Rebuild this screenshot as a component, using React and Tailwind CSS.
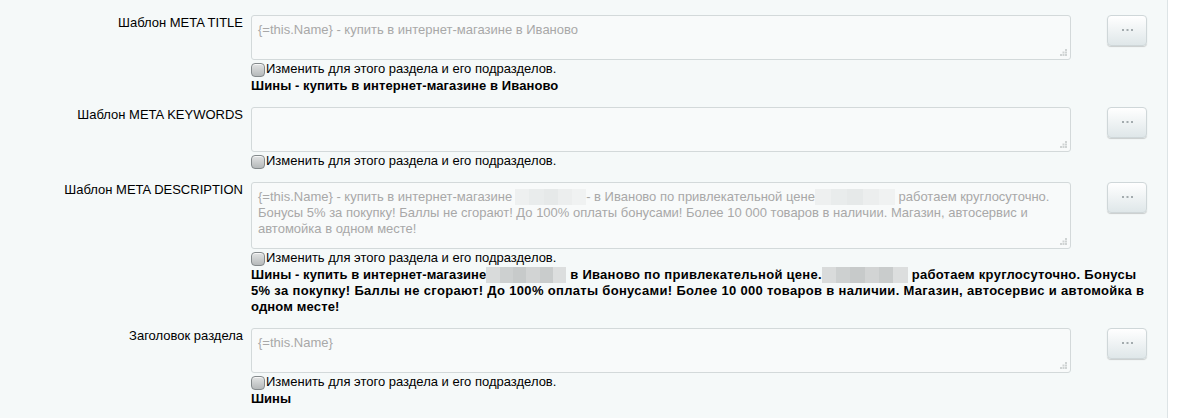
import React from "react";

const font = { fontFamily: '"Liberation Sans", Arial, sans-serif' };

function Grip() {
  return (
    <svg className="absolute right-[3px] bottom-[3px]" width="7" height="7" viewBox="0 0 7 7">
      <rect x="5" y="0" width="2" height="2" fill="#cfd3d3" />
      <rect x="2.5" y="2.5" width="2" height="2" fill="#cfd3d3" />
      <rect x="5" y="2.5" width="2" height="2" fill="#cfd3d3" />
      <rect x="0" y="5" width="2" height="2" fill="#cfd3d3" />
      <rect x="2.5" y="5" width="2" height="2" fill="#cfd3d3" />
      <rect x="5" y="5" width="2" height="2" fill="#cfd3d3" />
    </svg>
  );
}

function Area({ children, tall }) {
  return (
    <div
      className={`relative w-[820px] ${tall ? "h-[67px]" : "h-[45px]"} rounded-[3px] border border-[#d3d9da] bg-[#f8fafa] px-[6px] pt-[6px] text-[13px] leading-[16px] text-[#a8a8a8]`}
    >
      {children}
      <Grip />
    </div>
  );
}

function DotsButton() {
  return (
    <div className="ml-[36px] flex h-[31px] w-[40px] items-center justify-center rounded-[4px] border border-[#cfd7d9] bg-gradient-to-b from-[#ffffff] to-[#dfe7e9] shadow-[0_1px_1px_rgba(0,0,0,0.18)]">
      <svg width="11" height="3" viewBox="0 0 11 3">
        <rect x="0" y="0" width="2" height="2" fill="#a3abae" />
        <rect x="4.5" y="0" width="2" height="2" fill="#a3abae" />
        <rect x="9" y="0" width="2" height="2" fill="#a3abae" />
      </svg>
    </div>
  );
}

function Check() {
  return (
    <div className="flex h-[17px] items-start text-[13px] leading-[17px] text-black">
      <span className="mt-[3px] inline-block h-[14px] w-[14px] rounded-[4px] border border-[#83898b] bg-gradient-to-b from-[#e2e4e4] to-[#b5b9ba] shadow-[inset_0_1px_0_rgba(255,255,255,0.7)]" />
      <span className="ml-[1px]">Изменить для этого раздела и его подразделов.</span>
    </div>
  );
}

function BlurLight({ w }) {
  return (
    <span className="inline-flex h-[16px] align-top" style={{ width: w }}>
      <span className="h-full flex-1 bg-[#eef0f0]" />
      <span className="h-full flex-1 bg-[#e9ecec]" />
      <span className="h-full flex-1 bg-[#e6e9e9]" />
      <span className="h-full flex-1 bg-[#eceeee]" />
      <span className="h-full flex-1 bg-[#f0f2f2]" />
    </span>
  );
}

function BlurDark({ w }) {
  return (
    <span className="inline-flex h-[16px] align-top" style={{ width: w }}>
      <span className="h-full flex-1 bg-[#d9dbdb]" />
      <span className="h-full flex-1 bg-[#cdd0d0]" />
      <span className="h-full flex-1 bg-[#c7caca]" />
      <span className="h-full flex-1 bg-[#d2d4d4]" />
      <span className="h-full flex-1 bg-[#c9cccc]" />
      <span className="h-full flex-1 bg-[#dcdede]" />
    </span>
  );
}

function Row({ label, area, tall, bold }) {
  return (
    <div className="mb-[13px] flex items-start">
      <div className="w-[243px] shrink-0 text-right text-[13px] leading-[16px] text-black">{label}</div>
      <div className="ml-[8px] flex flex-col">
        <div className="flex items-start">
          <Area tall={tall}>{area}</Area>
          <DotsButton />
        </div>
        <Check />
        {bold && <div className="mt-[1px] text-[13px] font-bold leading-[16px] text-black">{bold}</div>}
      </div>
    </div>
  );
}

export default function App() {
  return (
    <div className="flex min-h-[418px] w-[1183px] bg-white" style={font}>
      <div className="w-[1168px] border-r border-[#dde4e6] bg-[#f5f9f9] pt-[15px]">
        <Row
          label="Шаблон META TITLE"
          area="{=this.Name} - купить в интернет-магазине в Иваново"
          bold={<span className="tracking-[0.08px]">Шины - купить в интернет-магазине в Иваново</span>}
        />
        <Row label="Шаблон META KEYWORDS" area="" />
        <Row
          label="Шаблон META DESCRIPTION"
          tall
          area={
            <>
              <div className="whitespace-nowrap">
                {"{=this.Name} - купить в интернет-магазине"}
                <span className="ml-[3px] inline-block align-top">
                  <BlurLight w={71} />
                </span>
                <span>{"- в Иваново по привлекательной цене"}</span>
                <BlurLight w={80} />
                {" работаем круглосуточно."}
              </div>
              <div className="whitespace-nowrap">
                Бонусы 5% за покупку! Баллы не сгорают! До 100% оплаты бонусами! Более 10 000 товаров в наличии. Магазин, автосервис и
              </div>
              <div className="whitespace-nowrap">автомойка в одном месте!</div>
            </>
          }
          bold={
            <>
              <div className="whitespace-nowrap">
                <span className="tracking-[0.08px]">{"Шины - купить в интернет-магазине"}</span>
                <BlurDark w={80} />
                <span className="tracking-[0.27px]">{" в Иваново по привлекательной цене."}</span>
                <BlurDark w={86} />
                <span className="tracking-[0.27px]">{" работаем круглосуточно. Бонусы"}</span>
              </div>
              <div className="whitespace-nowrap tracking-[0.32px]">
                5% за покупку! Баллы не сгорают! До 100% оплаты бонусами! Более 10 000 товаров в наличии. Магазин, автосервис и автомойка в
              </div>
              <div className="whitespace-nowrap tracking-[0.15px]">одном месте!</div>
            </>
          }
        />
        <Row label="Заголовок раздела" area="{=this.Name}" bold="Шины" />
      </div>
    </div>
  );
}
